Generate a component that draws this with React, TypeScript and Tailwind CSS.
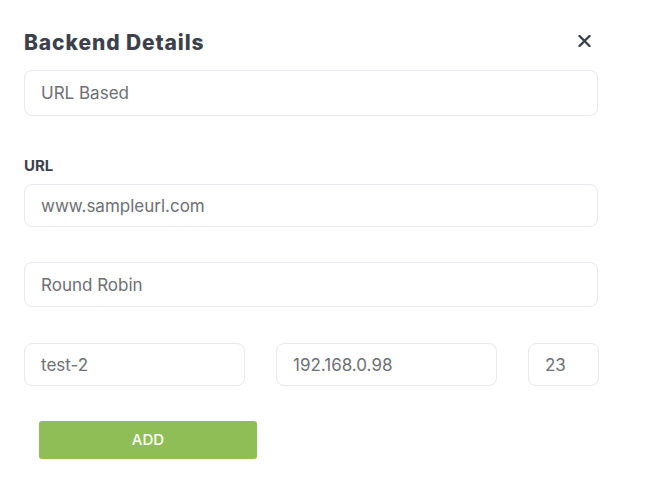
import React from 'react';

const fieldClass =
  'w-full rounded-lg border border-[#e6e9ee] bg-white px-4 text-[17px] text-[#6d7075] outline-none';

const Field: React.FC<{ value: string; className?: string }> = ({ value, className = '' }) => (
  <input readOnly value={value} className={`${fieldClass} ${className}`} />
);

export default function App() {
  return (
    <div
      className="w-[647px] h-[480px] bg-white pl-6 pr-[49px] pt-[28px]"
      style={{ fontFamily: '"Inter", "Liberation Sans", sans-serif' }}
    >
      {/* Header */}
      <div className="flex items-start justify-between">
        <h2 className="text-[21px] font-extrabold leading-[30px] tracking-[0.9px] text-[#3c414b]">
          Backend Details
        </h2>
        <button className="mr-[7px] mt-[7px] text-[#3c414b]" aria-label="Close">
          <svg width="13" height="12" viewBox="0 0 13 12" fill="none">
            <path d="M1.5 1L11.5 11M11.5 1L1.5 11" stroke="currentColor" strokeWidth="2.4" strokeLinecap="round" />
          </svg>
        </button>
      </div>

      <Field value="URL Based" className="mt-[12px] h-[46px]" />

      <label className="mt-[40px] block text-[15px] font-bold leading-[20px] text-[#3c414b]">URL</label>
      <Field value="www.sampleurl.com" className="mt-[8px] h-[43px]" />

      <Field value="Round Robin" className="mt-[35px] h-[45px]" />

      <div className="mt-[36px] flex gap-[31px]">
        <Field value="test-2" className="!w-[221px] h-[43px]" />
        <Field value="192.168.0.98" className="!w-[221px] h-[43px]" />
        <Field value="23" className="!w-[71px] h-[43px]" />
      </div>

      <button className="ml-[15px] mt-[35px] h-[38px] w-[218px] rounded-[3px] bg-[#8fbe56] text-[15px] font-medium text-white">
        ADD
      </button>
    </div>
  );
}
